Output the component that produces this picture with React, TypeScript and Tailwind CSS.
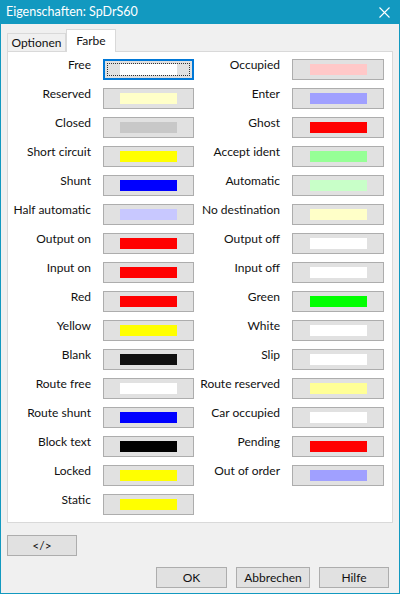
import React from "react";

type Entry = { label: string; color: string };

const LEFT: Entry[] = [
  { label: "Free", color: "#ffffff" },
  { label: "Reserved", color: "#ffffc8" },
  { label: "Closed", color: "#c8c8c8" },
  { label: "Short circuit", color: "#ffff00" },
  { label: "Shunt", color: "#0000ff" },
  { label: "Half automatic", color: "#c8c8ff" },
  { label: "Output on", color: "#ff0000" },
  { label: "Input on", color: "#ff0000" },
  { label: "Red", color: "#ff0000" },
  { label: "Yellow", color: "#ffff00" },
  { label: "Blank", color: "#101010" },
  { label: "Route free", color: "#ffffff" },
  { label: "Route shunt", color: "#0000ff" },
  { label: "Block text", color: "#000000" },
  { label: "Locked", color: "#ffff00" },
  { label: "Static", color: "#ffff00" },
];

const RIGHT: Entry[] = [
  { label: "Occupied", color: "#ffc8c8" },
  { label: "Enter", color: "#a0a0ff" },
  { label: "Ghost", color: "#ff0000" },
  { label: "Accept ident", color: "#96ff96" },
  { label: "Automatic", color: "#c8ffc8" },
  { label: "No destination", color: "#ffffc8" },
  { label: "Output off", color: "#ffffff" },
  { label: "Input off", color: "#ffffff" },
  { label: "Green", color: "#00ff00" },
  { label: "White", color: "#ffffff" },
  { label: "Slip", color: "#ffffff" },
  { label: "Route reserved", color: "#ffff96" },
  { label: "Car occupied", color: "#ffffff" },
  { label: "Pending", color: "#ff0000" },
  { label: "Out of order", color: "#a0a0ff" },
];

function ColorButton({ color, focused }: { color: string; focused?: boolean }) {
  return (
    <div
      className={`relative flex h-[21px] items-center justify-center border bg-[#e1e1e1] ${
        focused ? "border-[#0078d7] ring-1 ring-inset ring-[#0078d7]" : "border-[#adadad]"
      }`}
    >
      {/* focus rect, only on the active button */}
      {focused && <div className="absolute inset-[3px] border border-dotted border-[#333]" />}
      <div className="relative h-[11px] w-[57px]" style={{ backgroundColor: color }} />
    </div>
  );
}

function Row({ entry, focused }: { entry: Entry; focused?: boolean }) {
  return (
    <>
      <div className="h-[21px] pr-[12px] text-right leading-[12px]">{entry.label}</div>
      <ColorButton color={entry.color} focused={focused} />
    </>
  );
}

function DlgButton({ children, w }: { children: React.ReactNode; w: string }) {
  return (
    <div className={`flex h-[21px] items-center justify-center border border-[#adadad] bg-[#e1e1e1] ${w}`}>
      {children}
    </div>
  );
}

export default function App() {
  return (
    <div
      className="flex h-[594px] w-[400px] flex-col border border-t-0 border-[#1299c0] bg-[#f0f0f0] text-[12px] text-[#111]"
      style={{ fontFamily: 'Lato, "Noto Sans", sans-serif' }}
    >
      {/* title bar */}
      <div className="-mx-px flex h-[24px] shrink-0 items-center justify-between bg-[#1299c0] pl-[6px] pr-[10px] text-[12.5px] text-white">
        <span>Eigenschaften: SpDrS60</span>
        <svg width="11" height="11" viewBox="0 0 11 11" stroke="white" strokeWidth="1.1">
          <path d="M0.5 0.5 L10.5 10.5 M10.5 0.5 L0.5 10.5" />
        </svg>
      </div>

      {/* tabs */}
      <div className="mt-[5px] flex h-[22px] items-end pl-[6px]">
        <div className="flex h-[18px] w-[59px] items-center justify-center border border-b-0 border-[#d9d9d9] bg-[#f0f0f0]">
          Optionen
        </div>
        <div className="relative z-10 -mb-px flex h-[23px] w-[50px] items-center justify-center border border-b-0 border-[#d9d9d9] bg-white">
          Farbe
        </div>
      </div>

      {/* tab page */}
      <div className="mx-[6px] h-[472px] border border-[#d9d9d9] bg-white pt-[7px]">
        <div className="flex">
          <div className="grid grid-cols-[95px_91px] gap-y-[8px]">
            {LEFT.map((e, i) => (
              <Row key={e.label} entry={e} focused={i === 0} />
            ))}
          </div>
          <div className="grid grid-cols-[98px_92px] gap-y-[8px] self-start">
            {RIGHT.map((e) => (
              <Row key={e.label} entry={e} />
            ))}
          </div>
        </div>
      </div>

      <div className="mt-[12px] pl-[6px]">
        <DlgButton w="w-[70px]">&lt;/&gt;</DlgButton>
      </div>

      <div className="mt-[11px] flex justify-end gap-[9px] pr-[10px]">
        <DlgButton w="w-[71px]">OK</DlgButton>
        <DlgButton w="w-[74px]">Abbrechen</DlgButton>
        <DlgButton w="w-[70px]">Hilfe</DlgButton>
      </div>
    </div>
  );
}
